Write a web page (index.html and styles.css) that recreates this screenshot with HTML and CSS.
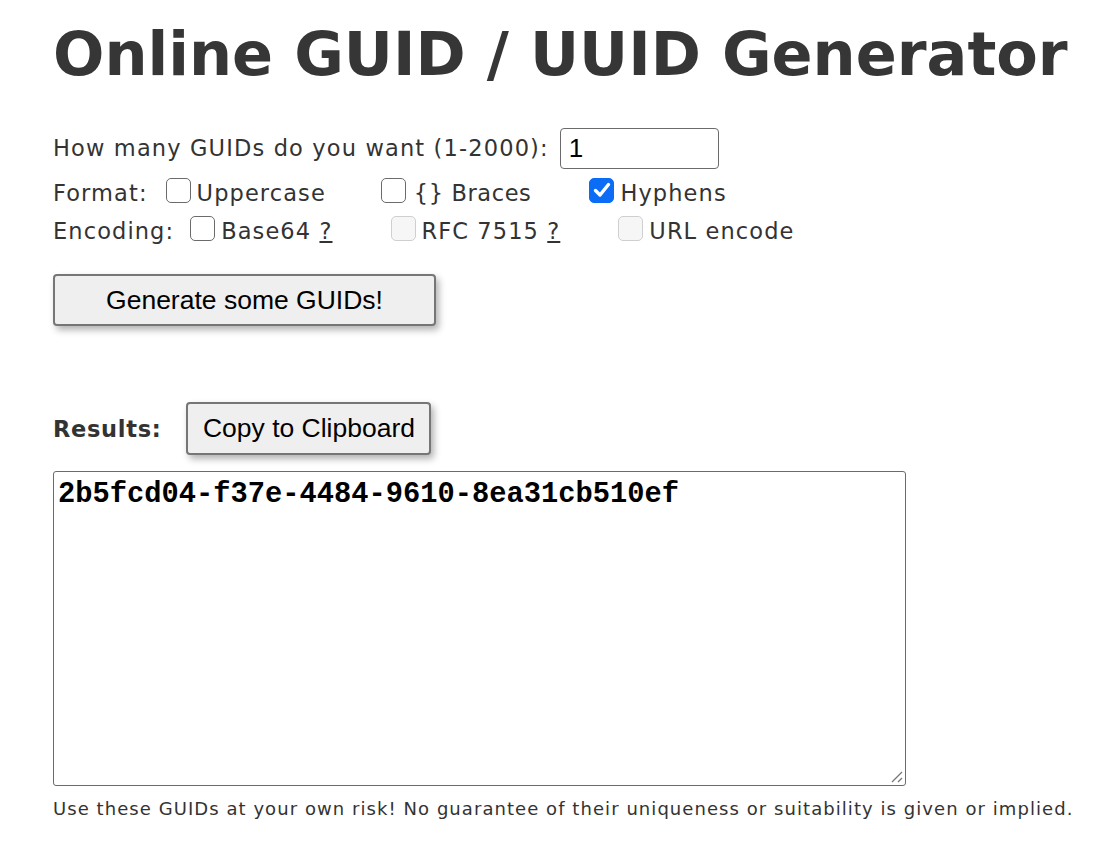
FILE: index.html
```html
<!DOCTYPE html>
<html>
<head>
<meta charset="utf-8">
<title>Online GUID / UUID Generator</title>
<link rel="stylesheet" href="styles.css">
</head>
<body>
<div class="page">
  <h1 class="title">Online GUID / UUID Generator</h1>
  <div class="row count-row">
    <span>How many GUIDs do you want (1-2000):</span>
    <span class="num-input">1</span>
  </div>
  <div class="row opt-row fmt-row">
    <span class="row-label fmt-label">Format:</span>
    <span class="opt opt-upper"><span class="cb"></span><span class="txt">Uppercase</span></span>
    <span class="opt opt-braces"><span class="cb"></span><span class="txt braces">{} Braces</span></span>
    <span class="opt"><span class="cb cb-checked"><svg viewBox="0 0 26 26" width="26" height="26"><path d="M6.5 13.5 L11 18 L19.5 7.5" fill="none" stroke="#fff" stroke-width="3.4" stroke-linecap="round" stroke-linejoin="round"/></svg></span><span class="txt">Hyphens</span></span>
  </div>
  <div class="row opt-row">
    <span class="row-label enc-label">Encoding:</span>
    <span class="opt opt-b64"><span class="cb"></span><span class="txt">Base64 <span class="q">?</span></span></span>
    <span class="opt opt-rfc"><span class="cb cb-disabled"></span><span class="txt">RFC 7515 <span class="q">?</span></span></span>
    <span class="opt"><span class="cb cb-disabled"></span><span class="txt">URL encode</span></span>
  </div>
  <div class="gen-wrap">
    <button class="btn btn-gen">Generate some GUIDs!</button>
  </div>
  <div class="results-head">
    <span class="results-label">Results:</span>
    <button class="btn btn-copy">Copy to Clipboard</button>
  </div>
  <div class="output">
    <div class="guid">2b5fcd04-f37e-4484-9610-8ea31cb510ef</div>
    <svg class="grip" width="14" height="14" viewBox="0 0 14 14"><path d="M3 13 L13 3 M9 13 L13 9" stroke="#777" stroke-width="1.3" fill="none"/></svg>
  </div>
  <p class="disclaimer">Use these GUIDs at your own risk! No guarantee of their uniqueness or suitability is given or implied.</p>
</div>
</body>
</html>
```
FILE: styles.css
```css
html, body {
  margin: 0;
  padding: 0;
  background: #fff;
}
body {
  font-family: "DejaVu Sans", Verdana, sans-serif;
  color: #333;
}
.page {
  padding: 18px 0 0 53px;
}
.title {
  margin: 0;
  font-size: 60.5px;
  font-weight: bold;
  line-height: 72px;
  color: #363636;
}
.row {
  display: flex;
  align-items: center;
  font-size: 22.5px;
  letter-spacing: 1.1px;
}
.count-row {
  margin-top: 37px;
  height: 42px;
  letter-spacing: 1.15px;
}
.num-input {
  margin-left: 11px;
  width: 159px;
  height: 41px;
  border: 1.5px solid #6b6b6b;
  border-radius: 4px;
  font-family: "Liberation Sans", Arial, sans-serif;
  color: #000;
  font-size: 26px;
  line-height: 38px;
  letter-spacing: 0;
  padding-left: 8px;
  box-sizing: border-box;
}
.opt-row {
  height: 38px;
}
.fmt-row {
  margin-top: 5px;
}
.fmt-label { margin-right: 18px; }
.enc-label { margin-right: 16px; }
.opt {
  display: flex;
  align-items: center;
}
.cb {
  display: inline-block;
  flex: none;
  width: 25px;
  height: 25px;
  box-sizing: border-box;
  border: 1.5px solid #6b6b6b;
  border-radius: 5px;
  background: #fff;
  margin-right: 6px;
  margin-top: -6px;
}
.cb-checked {
  background: #0b6cf6;
  border-color: #0b6cf6;
  position: relative;
}
.cb-checked svg {
  position: absolute;
  left: -1.5px;
  top: -1.5px;
}
.cb-disabled {
  border-color: #cfcfcf;
  background: #f6f6f6;
}
.braces {
  margin-left: 2px;
  letter-spacing: 0.6px;
}
.opt-upper { margin-right: 55px; }
.opt-braces { margin-right: 58px; }
.opt-b64 { margin-right: 58px; }
.opt-rfc { margin-right: 58px; }
.q {
  text-decoration: underline;
}
.gen-wrap {
  margin-top: 24px;
  height: 52px;
}
.btn {
  font-family: "Liberation Sans", Arial, sans-serif;
  font-size: 26.5px;
  color: #000;
  background: #efefef;
  border: 2px solid #767676;
  border-radius: 4px;
  box-shadow: 3px 4px 7px rgba(0,0,0,0.3);
  cursor: pointer;
  padding: 0;
}
.btn-gen {
  width: 383px;
  height: 52px;
}
.results-head {
  margin-top: 76px;
  display: flex;
  align-items: center;
}
.results-label {
  font-weight: bold;
  font-size: 22.5px;
  letter-spacing: 0.7px;
  margin-right: 25px;
}
.btn-copy {
  width: 245px;
  height: 53px;
}
.output {
  margin-top: 16px;
  width: 853px;
  height: 315px;
  box-sizing: border-box;
  border: 1.5px solid #6b6b6b;
  border-radius: 3px;
  position: relative;
  padding: 7px 4px;
}
.guid {
  font-family: "Liberation Mono", "Courier New", monospace;
  font-weight: bold;
  font-size: 28.75px;
  color: #000;
  line-height: 32px;
}
.grip {
  position: absolute;
  right: 2px;
  bottom: 2px;
}
.disclaimer {
  margin: 12px 0 0 0;
  font-size: 18px;
  letter-spacing: 1.06px;
  line-height: 22px;
  color: #333;
}
```
